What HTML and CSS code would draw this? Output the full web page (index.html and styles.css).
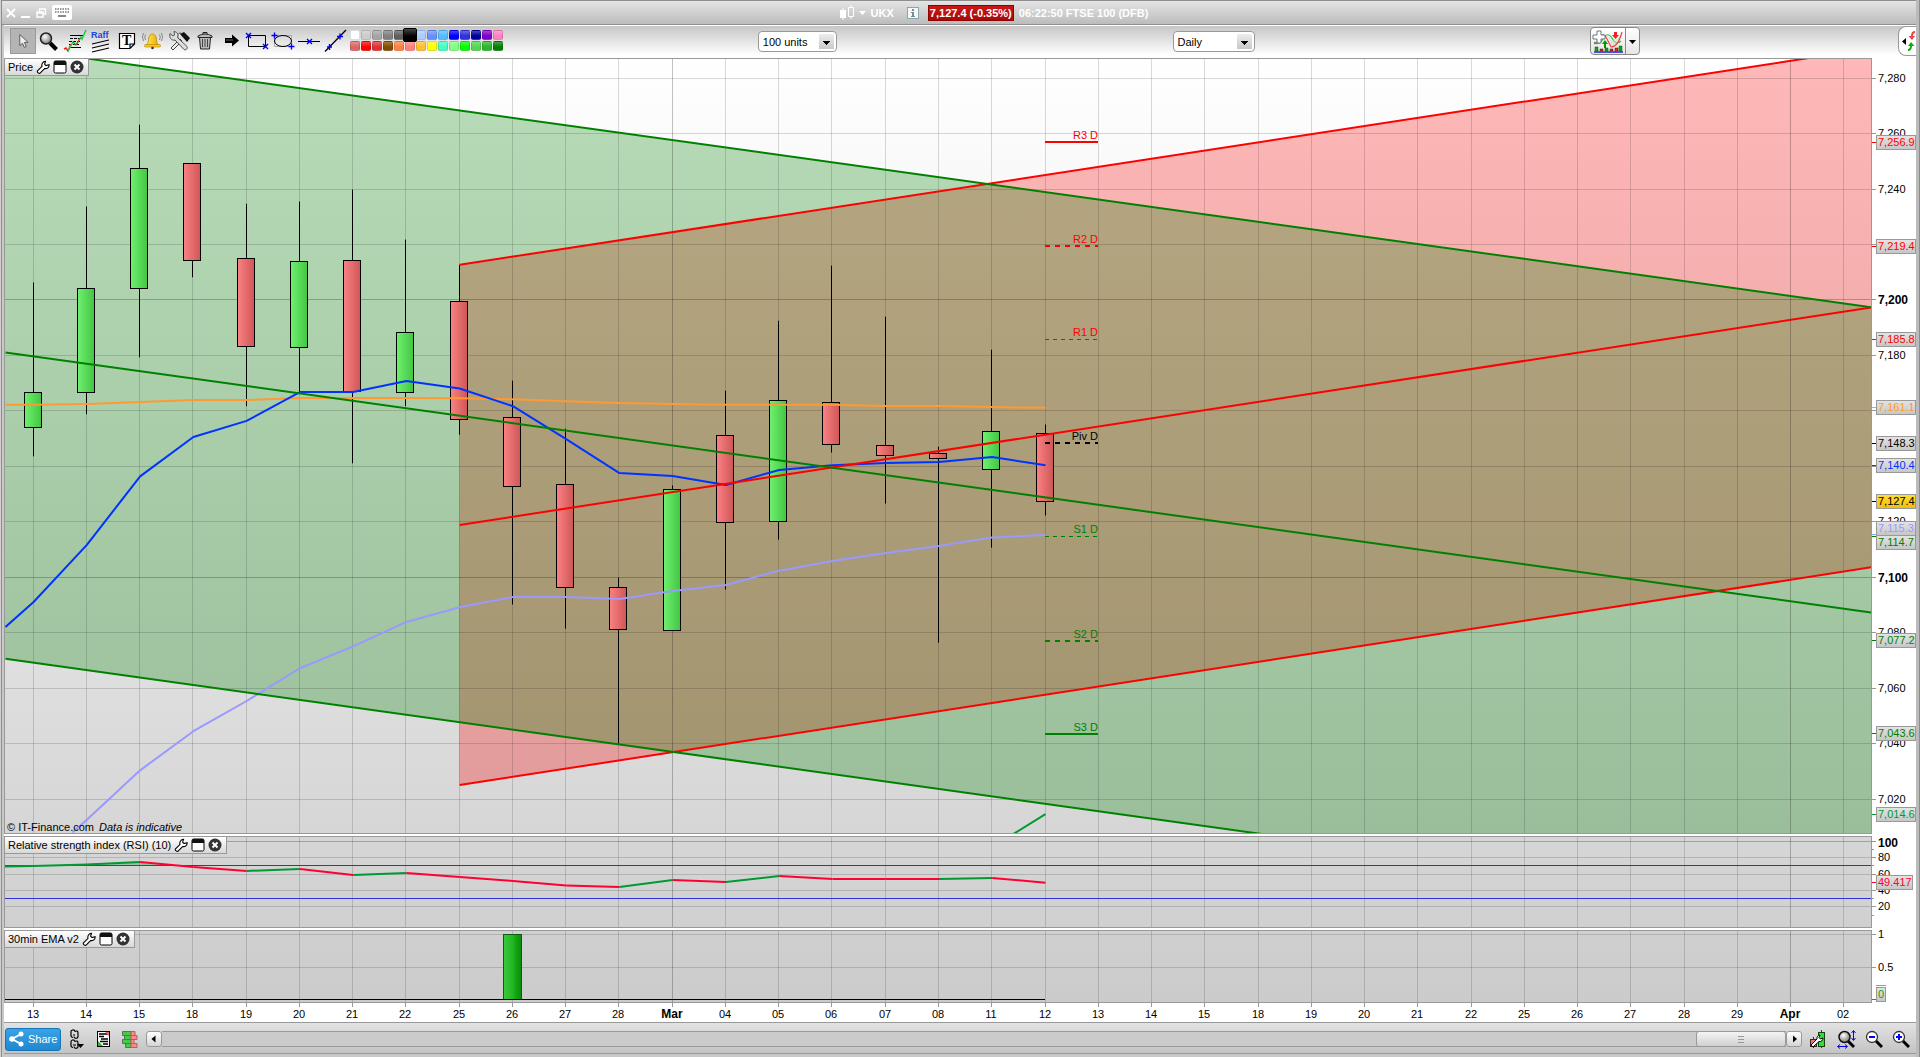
FILE: index.html
```html
<!DOCTYPE html>
<html lang="en">
<head>
<meta charset="utf-8">
<title>UKX - FTSE 100 (DFB)</title>
<link rel="stylesheet" href="styles.css">
</head>
<body>
<svg class="defs" aria-hidden="true">
  <defs>
    <linearGradient id="up"><stop offset="0" stop-color="#70f070"/><stop offset="1" stop-color="#42c642"/></linearGradient>
    <linearGradient id="down"><stop offset="0" stop-color="#fa8282"/><stop offset="1" stop-color="#cf5656"/></linearGradient>
    <linearGradient id="histo"><stop offset="0" stop-color="#3cc83c"/><stop offset=".5" stop-color="#22b822"/><stop offset=".7" stop-color="#10a510"/><stop offset="1" stop-color="#0c8a0c"/></linearGradient>
    <linearGradient id="tag" x2="0" y2="1"><stop offset="0" stop-color="#e4e4e4"/><stop offset="1" stop-color="#c6c6c6"/></linearGradient>
    <linearGradient id="tagLast" x2="0" y2="1"><stop offset="0" stop-color="#ffe030"/><stop offset="1" stop-color="#efbc10"/></linearGradient>
    <radialGradient id="lens" cx=".4" cy=".35"><stop offset="0" stop-color="#fff"/><stop offset="1" stop-color="#999"/></radialGradient>
    <linearGradient id="gold"><stop offset="0" stop-color="#ffe95a"/><stop offset="1" stop-color="#eba800"/></linearGradient>
    <symbol id="wrench" viewBox="0 0 14 14"><path d="M1.5 10.8 6 6.4C5.300 4 6.800 1.500 9.500 1.300L8.600 4.200l1.400 1.400 3.100-.8c.2 2.600-2 4.200-4.500 3.700l-4.500 4.600c-1 .8-3.400-.8-2.600-2.300z" fill="#fff" stroke="#000" stroke-width="1.100"/></symbol>
    <symbol id="window" viewBox="0 0 14 14"><rect x="1" y="1" width="12" height="12" rx="1.500" fill="#fff" stroke="#000"/><path d="M1 5V2.500Q1 1 2.500 1h9Q13 1 13 2.500V5z" fill="#111"/></symbol>
    <symbol id="close" viewBox="0 0 14 14"><circle cx="7" cy="7" r="6.500" fill="#333"/><path d="m4.500 4.500 5 5m0-5-5 5" stroke="#fff" stroke-width="2"/></symbol>
  </defs>
</svg>

<div class="app">
  <header class="titlebar">
    <div class="window-buttons">
      <button class="plain" aria-label="Close window"><svg width="10" height="14" viewBox="0 0 10 14"><path d="m1 3 8 8m0-8-8 8" stroke="#fff" stroke-width="1.800"/></svg></button>
      <button class="plain" aria-label="Minimise"><svg width="10" height="14" viewBox="0 0 10 14"><path d="M0 11h9" stroke="#fff" stroke-width="2"/></svg></button>
      <button class="plain" aria-label="Restore"><svg width="11" height="14" viewBox="0 0 11 14"><path d="M3.500 5V3h6v5h-2M3 3h7M1 6h6v5H1zM1 7h6" fill="none" stroke="#fff" stroke-width="1.400"/></svg></button>
      <button class="plain" aria-label="Keyboard"><svg width="20" height="15" viewBox="0 0 20 15"><rect width="20" height="15" rx="2" fill="#fff"/><path d="M3 4h14M3 7h14" stroke="#999" stroke-width="2" stroke-dasharray="1.500 1"/><path d="M6 11h8" stroke="#888" stroke-width="2"/></svg></button>
    </div>
    <h1 class="instrument">
      <svg width="14" height="17" viewBox="0 0 14 17"><path d="M0 6h6v8H0zM2.500 4h1v12h-1z" fill="#fff"/><path d="M8.500 3.500h5v9h-5zM11 1v2.500M11 12.500V15" fill="none" stroke="#fff"/></svg>
      <svg class="caret" width="7" height="4" viewBox="0 0 7 4"><path d="M0 0h7L3.500 4z" fill="#fff"/></svg>
      <span class="symbol">UKX</span>
      <svg width="12" height="12" viewBox="0 0 12 12"><rect x=".5" y=".5" width="11" height="11" fill="#f4f8f8" stroke="#86a8ae"/><path d="M5 2h2v2H5zM4 5h3v4h1v1H4V9h1V6H4z" fill="#7b8d90"/></svg>
      <span class="quote">7,127.4 (-0.35%)</span>
      <span>06:22:50 FTSE 100 (DFB)</span>
    </h1>
  </header>

  <div class="toolbar">
    <div class="tools">
      <button class="tool active" aria-label="Pointer"><svg viewBox="0 0 26 26"><path d="M9.500 6v12l3-2.500 2 4.500 2-1-2-4.500h4z" fill="#eee" stroke="#555"/></svg></button>
      <button class="tool" aria-label="Zoom"><svg viewBox="0 0 26 26"><path d="m14 15 6.500 6.500" stroke="#000" stroke-width="4"/><circle cx="10" cy="10.500" r="5.500" fill="url(#lens)" stroke="#222" stroke-width="1.500"/></svg></button>
      <button class="tool" aria-label="Trading from chart"><svg viewBox="0 0 26 26"><path d="M8 7.500h13M7 19.500h12" stroke="#000"/><path d="M8 10.500h12M7 13.500h12M7 16.500h10" stroke="#000" stroke-dasharray="3 1"/><path d="m2 21 2-1 2 3 3-7" fill="none" stroke="#e22" stroke-width="1.500"/><path d="m6 23 5-9 3 3 5-8 1 2 4-9" fill="none" stroke="#2c4" stroke-width="1.500"/><path d="m11 14 3 3 4-7" fill="none" stroke="#e22"/></svg></button>
      <button class="tool" aria-label="Raff regression"><svg viewBox="0 0 26 26"><text x="3" y="10" class="raff">Raff</text><path d="m4 16 17-4M4 20l17-4M4 24l17-4" stroke="#000" stroke-width="1.200"/></svg></button>
      <button class="tool" aria-label="Text"><svg viewBox="0 0 26 26"><path d="M5.500 5.500h15V16L16 20.500H5.500zM20.500 16H16v4.500" fill="#fff" stroke="#000" stroke-width="1.200"/><text x="8" y="17" class="tee">T</text></svg></button>
      <button class="tool" aria-label="Alerts"><svg viewBox="0 0 26 26"><path d="M6 17c3-2 2-5 3-8 .6-2 2-3 3.500-3S15.400 7 16 9c1 3 0 6 3 8z" fill="url(#gold)" stroke="#b98600" stroke-width=".8"/><rect x="4.500" y="16.500" width="16" height="2.500" rx="1" fill="#f8c820" stroke="#b98600" stroke-width=".6"/><circle cx="12.500" cy="20" r="1.300" fill="#333"/><path d="M5.500 6.500Q4 9 5.500 12M3.500 5Q1.500 9 3.500 13M19.500 6.500Q21 9 19.500 12M21.500 5Q23.500 9 21.500 13" fill="none" stroke="#888"/></svg></button>
      <button class="tool" aria-label="Settings"><svg viewBox="0 0 26 26"><path d="m5 20 9-9 2 2-9 9zM15 5c-4 0-4 4-2 6" fill="#eee" stroke="#444"/><path d="m14 6 4-2 6 6-3 4z" fill="#111"/><path d="M4 5.500 7 8l1.500-1L8 3.500C12 4 12.500 7 11.500 9.500l9.500 9c1 2-1 4-3 3L9 12C5 13 3 9 4 5.500z" fill="#ddd" stroke="#444" stroke-width=".9"/></svg></button>
      <button class="tool" aria-label="Delete"><svg viewBox="0 0 26 26"><path d="M7.500 9.500h11l-1 11.500h-9z" fill="#bbb" stroke="#222"/><path d="M10.500 11v8M13 11v8M15.500 11v8" stroke="#444"/><path d="M6 8q7-4 14 0v1.500H6zM11 6V4.500h4V6" fill="#bbb" stroke="#222"/></svg></button>
      <button class="tool" aria-label="Arrow"><svg viewBox="0 0 26 26"><path d="M7 10h7V6.500l7 6-7 6V15H7z" fill="#000"/><path d="M8 12h7" stroke="#666"/></svg></button>
      <button class="tool" aria-label="Rectangle"><svg viewBox="0 0 26 26"><path d="M4.500 7.500h17v11h-17z" fill="none" stroke="#000"/><path d="m2 5 5 5m0-5-5 5M19 16l5 5m0-5-5 5" stroke="#00f" stroke-width="1.400"/></svg></button>
      <button class="tool" aria-label="Ellipse"><svg viewBox="0 0 26 26"><path d="M4.500 7.500h17v11h-17z" fill="none" stroke="#aaa"/><ellipse cx="13" cy="13" rx="8.500" ry="5.500" fill="none" stroke="#000"/><path d="M4.500 4.500v6m-3-3h6M21.500 15.500v6m-3-3h6" stroke="#00f" stroke-width="1.400"/></svg></button>
      <button class="tool" aria-label="Horizontal line"><svg viewBox="0 0 26 26"><path d="M2 13.500h22" stroke="#000"/><path d="m11 11 5 5m0-5-5 5" stroke="#00f" stroke-width="1.400"/></svg></button>
      <button class="tool" aria-label="Trend line"><svg viewBox="0 0 26 26"><path d="M3 23.500 24 2" stroke="#000" stroke-width="1.300"/><path d="m5 19 5 0m-2.500-3v6M15 8.500h6m-3-3v6" stroke="#00f" stroke-width="1.400"/></svg></button>
      <div class="palette" id="palette" role="group" aria-label="Colours"></div>
    </div>
    <select class="select units" aria-label="Units"><option>100 units</option></select>
    <select class="select period" aria-label="Timeframe"><option>Daily</option></select>
    <div class="indicators">
      <button aria-label="Add indicator"><svg width="34" height="26" viewBox="0 0 34 26"><path d="M3 14q5 5 10-5 4-5 8 1 4 8 9 3" fill="none" stroke="#3b3" stroke-width="1.200"/><path d="M14 6q5 4 6 13 6 0 11-15-4 8-10 8-3-4-7-6z" fill="#cdc8"/><path d="M3 16q3-1 6-7 4-5 7 2l4 8q7 0 11-15" fill="none" stroke="#e44" stroke-width="1.200"/><path d="M6 3h4v4h4v4h-4v4H6v-4H2V7h4z" fill="#fff" stroke="#678"/><path d="m14 12-3 4h2v4h2v-4h2z" fill="#090"/><path d="M23 4h3v3h2l-3.500 4L21 7h2z" fill="#e22"/><path d="M4 19h3v4H4zM14 20h3v3h-3zM28 18h3v5h-3z" fill="#1a1" stroke="#050" stroke-width=".5"/><path d="M9 21h3v2H9zM19 21h3v2h-3zM24 20h3v3h-3z" fill="#d33" stroke="#500" stroke-width=".5"/><path d="M3 24h29" stroke="#22c" stroke-width="1.500"/></svg></button>
      <button aria-label="Indicator list"><svg width="13" height="26" viewBox="0 0 13 26"><path d="M3 12h7l-3.500 4z"/></svg></button>
    </div>
    <button class="drawer" aria-label="Open side panel"><svg width="17" height="28" viewBox="0 0 17 28"><path d="M7 11v7l-4-3.500z"/><path d="M16 4q-4 0-4 5H9.500l3.500 4 3-4h-2q0-3 2-3z" fill="#e44"/><path d="M9 24q4 0 4-5h2.500L12 15l-3 4h2q0 3-2 3z" fill="#1a1"/></svg></button>
  </div>

  <main class="charts">
    <section class="panel price">
      <div class="plot">
        <svg class="canvas" id="pricePlot"></svg>
        <div class="panel-head"><h2>Price</h2>
          <button class="plain" aria-label="Configure"><svg width="14" height="14"><use href="#wrench"/></svg></button><button class="plain" aria-label="Detach"><svg width="14" height="14"><use href="#window"/></svg></button><button class="plain" aria-label="Close"><svg width="14" height="14"><use href="#close"/></svg></button>
        </div>
        <p class="credit">© IT-Finance.com <em>Data is indicative</em></p>
      </div>
      <div class="axis"><svg class="canvas" id="priceAxis"></svg></div>
    </section>
    <section class="panel rsi">
      <div class="plot">
        <svg class="canvas" id="rsiPlot"></svg>
        <div class="panel-head"><h2>Relative strength index (RSI) (10)</h2>
          <button class="plain" aria-label="Configure"><svg width="14" height="14"><use href="#wrench"/></svg></button><button class="plain" aria-label="Detach"><svg width="14" height="14"><use href="#window"/></svg></button><button class="plain" aria-label="Close"><svg width="14" height="14"><use href="#close"/></svg></button>
        </div>
      </div>
      <div class="axis"><svg class="canvas" id="rsiAxis"></svg></div>
    </section>
    <section class="panel ema">
      <div class="plot">
        <svg class="canvas" id="emaPlot"></svg>
        <div class="panel-head"><h2>30min EMA v2</h2>
          <button class="plain" aria-label="Configure"><svg width="14" height="14"><use href="#wrench"/></svg></button><button class="plain" aria-label="Detach"><svg width="14" height="14"><use href="#window"/></svg></button><button class="plain" aria-label="Close"><svg width="14" height="14"><use href="#close"/></svg></button>
        </div>
      </div>
      <div class="axis"><svg class="canvas" id="emaAxis"></svg></div>
    </section>
    <div class="dates"><svg class="canvas" id="dateAxis"></svg></div>
  </main>

  <footer class="bottombar">
    <button class="share"><svg width="15" height="16" viewBox="0 0 15 16"><path d="M12 3 3 8l9 5" fill="none" stroke="#fff" stroke-width="1.800"/><circle cx="12" cy="3" r="2.500" fill="#fff"/><circle cx="3" cy="8" r="2.800" fill="#fff"/><circle cx="12" cy="13" r="2.500" fill="#fff"/></svg>Share</button>
    <div class="bottom-tools">
      <button class="plain" aria-label="Link windows"><svg width="16" height="20" viewBox="0 0 16 20"><path d="M4 8.500a2 2 0 0 1-2-2v-3a2 2 0 0 1 4-1M6 2.500q3-1.500 3 1.500v3a2 2 0 0 1-4 .5M4 18.500a2 2 0 0 1-2-2v-3a2 2 0 0 1 4-1M6 12.500q3-1.500 3 1.500v3a2 2 0 0 1-4 .5M4 6h2M4 16h3" fill="none" stroke="#000" stroke-width="1.200"/><path d="M8 15h7l-3.500 4z"/></svg></button>
      <button class="plain" aria-label="Orders"><svg width="13" height="16" viewBox="0 0 13 16"><rect x=".5" y=".5" width="12" height="15" fill="#fff" stroke="#000"/><path d="M2 3h9M2 5.500h5M4 8h7M3 10.500h8M6 13h5" stroke="#000" stroke-width="1.600"/><path d="M8 1h4v4z" fill="#e66"/><path d="M1 15v-5l5 5z" fill="#2b2"/></svg></button>
      <button class="plain" aria-label="Market depth"><svg width="16" height="17" viewBox="0 0 16 17"><path d="M.5.5H9v4H.5zM2.500 4.500H9v4H2.500zM.5 8.500H9v4H.5zM3.500 12.500H9v4H3.500z" fill="#4c4" stroke="#575"/><path d="M9 .5h4v4H9zM9 4.500h6v4H9zM9 8.500h3v4H9zM9 12.500h6v4H9z" fill="#f88" stroke="#a66"/></svg></button>
    </div>
    <div class="scroller" role="group" aria-label="Scroll through history">
      <button class="step" aria-label="Back"><svg width="14" height="14" viewBox="0 0 14 14"><path d="M8.500 3.500v7l-4-3.500z"/></svg></button>
      <div class="track"><div class="thumb"><svg width="6" height="7" viewBox="0 0 6 7"><path d="M0 .5h6M0 3.500h6M0 6.500h6" stroke="#999"/></svg></div></div>
      <button class="step" aria-label="Forward"><svg width="14" height="14" viewBox="0 0 14 14"><path d="M6 3.500v7l4-3.500z"/></svg></button>
    </div>
    <div class="view-tools">
      <button class="plain" aria-label="Candle settings"><svg width="18" height="20" viewBox="0 0 18 20"><path d="M4.500 8v11M12.500 1v18" stroke="#333"/><rect x="1.500" y="10.500" width="6" height="7" fill="#e77" stroke="#422"/><rect x="9.500" y="3.500" width="6" height="14" fill="#3d3" stroke="#141"/><path d="M2 16l6-6c-.5-2 1-4 3-4L10 8.500l1.500 1.500L14 9c0 2.500-2 4-4 3.500L4 18z" fill="#fff" stroke="#000"/></svg></button>
      <button class="plain" aria-label="Fit"><svg width="20" height="20" viewBox="0 0 20 20"><path d="m12 12 6 6" stroke="#000" stroke-width="3"/><circle cx="8.500" cy="8" r="5.500" fill="url(#lens)" stroke="#111" stroke-width="1.500"/><path d="M17.500 2v9M15.500 4l2-2.500 2 2.500M15.500 9l2 2.500 2-2.500M2 17.500h9M4 15.500l-2.500 2L4 19.500M9 15.500l2.500 2-2.500 2" fill="none" stroke="#00f"/></svg></button>
      <button class="plain" aria-label="Zoom out"><svg width="18" height="18" viewBox="0 0 18 18"><path d="m10 10 7 7" stroke="#000" stroke-width="3"/><circle cx="7" cy="7" r="5.500" fill="#fff" stroke="#333" stroke-width="1.300"/><path d="M4 7h6" stroke="#00f" stroke-width="2"/></svg></button>
      <button class="plain" aria-label="Zoom in"><svg width="18" height="18" viewBox="0 0 18 18"><path d="m10 10 7 7" stroke="#000" stroke-width="3"/><circle cx="7" cy="7" r="5.500" fill="#fff" stroke="#333" stroke-width="1.300"/><path d="M4 7h6M7 4v6" stroke="#00f" stroke-width="2"/></svg></button>
    </div>
  </footer>
</div>
<script src="chart.js"></script>
</body>
</html>
```
FILE: styles.css
```css
* { box-sizing: border-box; }
body {
  margin: 0;
  font: 11px/14px "Liberation Sans", Arial, sans-serif;
  color: #000;
  background: #bdbdbd;
}
h1, h2, p { margin: 0; font-size: inherit; font-weight: normal; }
button { padding: 0; border: 0; font: inherit; color: inherit; }
svg { display: block; }
.defs { position: absolute; width: 0; height: 0; }
.plain { background: none; }

.app {
  display: grid;
  grid-template-rows: 25px 33px 1fr 32px;
  min-height: 100vh;
  padding: 0 4px 3px;
  background: linear-gradient(90deg, #d0d0d0 1px, #8e8e8e 1px 2px, #c8c8c8 2px calc(100% - 4px), #bbb calc(100% - 4px) calc(100% - 1px), #8e8e8e calc(100% - 1px));
}

.titlebar {
  display: flex;
  align-items: center;
  margin: 0 0 0 -2px;
  padding: 0 0 0 4px;
  border-top: 1px solid #8e8e8e;
  border-bottom: 1px solid #8e8e8e;
  background: linear-gradient(#e4e4e4, #bcbcbc);
  color: #fff;
}
.window-buttons { display: flex; align-items: center; gap: 5px; }
.instrument {
  flex: 1;
  display: flex;
  align-items: center;
  justify-content: center;
  gap: 5px;
  font-weight: bold;
}
.symbol { margin-right: 8px; }
.quote {
  margin-left: 4px;
  padding: 0 1px;
  border: 1px solid #8e0000;
  background: linear-gradient(#c81818, #a80808);
}

.toolbar {
  display: grid;
  grid-template-columns: auto 254fr 79px 336fr 82px 336fr 50px 258fr 18px;
  align-items: center;
  padding-bottom: 2px;
  border-top: 1px solid #fff;
  background: linear-gradient(#c6c6c6, #fff 90%);
}
.tools { display: flex; align-items: center; padding-left: 6px; }
.tool { width: 26px; height: 26px; background: none; }
.tool.active { border: 1px solid #999; background: #b4b4b4; }
.raff { font-size: 9px; font-weight: bold; fill: #2244dd; }
.tee { font: bold 14px "Liberation Serif", serif; }
.palette {
  display: grid;
  grid-template-columns: repeat(14, 11px);
  grid-auto-rows: 11px;
  margin-left: 2px;
}
.swatch {
  width: 10px;
  height: 10px;
  border-radius: 2px;
  border: 1px solid #0002;
  background-image: linear-gradient(#fff4, #fff0 60%);
}
.swatch.chosen { width: 14px; height: 14px; margin: -2px; z-index: 1; border-color: #000; }

.select {
  appearance: none;
  height: 21px;
  margin-top: 1px;
  padding: 0 18px 0 4px;
  border: 1px solid #999;
  border-radius: 4px;
  color: #000;
  font: inherit;
  background:
    linear-gradient(#000, #000) right 6px top 9px / 7px 1px no-repeat,
    linear-gradient(#000, #000) right 7px top 10px / 5px 1px no-repeat,
    linear-gradient(#000, #000) right 8px top 11px / 3px 1px no-repeat,
    linear-gradient(#000, #000) right 9px top 12px / 1px 1px no-repeat,
    linear-gradient(#eee, #c8c8c8) right 2px center / 15px 15px no-repeat,
    #fff;
}
.units { grid-column: 3; }
.period { grid-column: 5; }
.indicators {
  grid-column: 7;
  display: flex;
  height: 28px;
  border: 1px solid #888;
  border-radius: 4px;
  background: linear-gradient(#fff, #e6e6e6);
}
.indicators button { background: none; }
.indicators button + button { border-left: 1px solid #888; }
.drawer {
  grid-column: 9;
  border: 1px solid #999;
  border-right: 0;
  border-radius: 8px 0 0 8px;
  background: #fff;
}

.charts {
  display: grid;
  grid-template-rows: minmax(260px, 776fr) minmax(60px, 94fr) minmax(50px, 75fr) 19px;
  background: #fff;
}
.panel { display: grid; grid-template-columns: 1fr 44px; min-width: 0; }
.rsi, .ema { padding-top: 2px; }
.plot { position: relative; overflow: hidden; border: 1px solid #999; }
.axis, .dates { position: relative; }
.canvas { position: absolute; inset: 0; width: 100%; height: 100%; }
.price .plot { background: linear-gradient(#fff, #d6d6d6); }
.rsi .plot { background: linear-gradient(#d6d6d6, #d0d0d0); }
.ema .plot { background: linear-gradient(#d0d0d0, #cbcbcb); }

.panel-head {
  position: absolute;
  top: 0;
  left: 0;
  display: flex;
  align-items: center;
  gap: 3px;
  height: 17px;
  padding: 0 4px 1px 3px;
  border: solid #999;
  border-width: 0 1px 1px 0;
  background: linear-gradient(#fff, #d8d8d8);
}
.credit { position: absolute; left: 2px; bottom: -1px; }
.credit em { margin-left: 2px; }

.canvas text { font-size: 11px; }
.canvas .major { font-size: 12px; font-weight: bold; }
.grid { stroke: #000; stroke-opacity: .15; }
.grid-major { stroke: #000; stroke-opacity: .24; }
.tick { stroke: #999; }
.line { fill: none; stroke-width: 2; stroke-linejoin: round; }
.end { text-anchor: end; }
.mid { text-anchor: middle; }

.bottombar {
  display: flex;
  align-items: center;
  padding: 2px 6px 0 1px;
  border-top: 1px solid #999;
  border-bottom: 1px solid #999;
  background: linear-gradient(#e2e2e2, #c4c4c4);
}
.share {
  display: flex;
  align-items: center;
  gap: 4px;
  height: 23px;
  padding: 0 3px;
  border: 1px solid #1474b8;
  border-radius: 3px;
  color: #fff;
  background: linear-gradient(#3aa2e6, #1f88d0);
}
.bottom-tools { display: flex; align-items: center; gap: 12px; padding: 0 8px 0 8px; }
.scroller { flex: 1; display: flex; align-items: center; }
.step {
  height: 16px;
  border: 1px solid #999;
  border-radius: 3px;
  background: linear-gradient(#fff, #d4d4d4);
}
.track {
  flex: 1;
  display: flex;
  justify-content: flex-end;
  height: 16px;
  border: solid #999;
  border-width: 1px 0;
  background: #cbcbcb;
}
.thumb {
  width: 90px;
  display: grid;
  place-items: center;
  margin: -1px 0;
  border: 1px solid #999;
  border-radius: 3px;
  background: linear-gradient(#f4f4f4, #d0d0d0);
}
.view-tools { display: flex; align-items: center; gap: 9px; padding-left: 7px; }
```
FILE: chart.js
```js
const SESSIONS = ['13', '14', '15', '18', '19', '20', '21', '22', '25', '26', '27', '28', 'Mar', '04', '05', '06', '07', '08',
  '11', '12', '13', '14', '15', '18', '19', '20', '21', '22', '25', '26', '27', '28', '29', 'Apr', '02'];
const LEFT = -0.5276;
const SPAN = 35.037;

// open, high, low, close
const CANDLES = [
  [7153.9, 7206.3, 7143.6, 7166.8], [7166.8, 7233.7, 7158.8, 7204.3], [7204.3, 7263.2, 7179.3, 7247.3],
  [7249.1, 7249.1, 7208.2, 7214.4], [7214.8, 7234.7, 7161.7, 7183.4], [7182.7, 7235.5, 7167, 7213.7],
  [7214.4, 7239.8, 7141.1, 7167.1], [7166.5, 7221.8, 7161.7, 7188.1], [7199.3, 7212.7, 7151.4, 7157],
  [7157.5, 7170.9, 7090.2, 7132.6], [7133.3, 7153.6, 7081.5, 7096.4], [7096.2, 7099.9, 7040, 7081.2],
  [7081, 7133.1, 7081, 7131.5], [7151.3, 7167.3, 7095.6, 7119.6], [7120.2, 7192.5, 7113.6, 7163.6],
  [7163.2, 7212.4, 7145, 7148], [7147.7, 7194, 7126.6, 7144], [7144.5, 7147.1, 7076.4, 7142.7],
  [7138.7, 7182.1, 7110.7, 7152.4], [7151.7, 7155.1, 7122.3, 7127.4]];

const AVERAGES = [
  { color: '#ff9933', from: 0, lead: [LEFT, 7162.2], v: [7162.2, 7162.5, 7163.2, 7163.9, 7163.9, 7164.7, 7164.7, 7164.7, 7164.6, 7164.2, 7163.5, 7162.9, 7162.5, 7162.2, 7162.2, 7162.2, 7161.8, 7161.8, 7161.4, 7161.1] },
  { color: '#9999ff', from: 1, lead: [0.73, 7008], v: [7012.6, 7030.4, 7044.5, 7055.4, 7067.2, 7075.1, 7083.9, 7089.2, 7092.9, 7092.9, 7092.2, 7095.1, 7097.2, 7102.4, 7105.9, 7108.8, 7111.3, 7114.4, 7115.3] },
  { color: '#0033ff', from: 0, lead: [LEFT, 7082.1], v: [7091.1, 7111.7, 7136.4, 7150.6, 7156.4, 7166.8, 7166.8, 7170.8, 7168.1, 7161.7, 7149.8, 7137.6, 7136.5, 7133.3, 7138.7, 7140.4, 7141.2, 7141.6, 7143.4, 7140.4] },
  { color: '#009933', from: 19, lead: [18.4, 7007.5], v: [7014.6] }];

const CHANNELS = [
  { color: '#ff0000', from: 8, lines: [[7212.7, 7290.7], [7118.9, 7197.3], [7025.1, 7103.6]] },
  { color: '#008000', from: LEFT, lines: [[7291.2, 7197.4], [7181.1, 7087.3], [7070.6, 6976.8]] }];

const PIVOTS = [
  ['R3 D', 7256.9, '#ff0000', 2, ''], ['R2 D', 7219.4, '#ff0000', 2, '5 5'], ['R1 D', 7185.8, '#ff0000', 1, '4 4'],
  ['Piv D', 7148.3, '#000000', 2, '5 5'], ['S1 D', 7114.7, '#008000', 1, '4 4'], ['S2 D', 7077.2, '#008000', 2, '5 5'],
  ['S3 D', 7043.6, '#008000', 2, '']];

// text, level, colour, shift of the tag away from its tick
const TAGS = [
  ['7,256.9', 7256.9, '#ff0000', 0], ['7,219.4', 7219.4, '#ff0000', 0], ['7,185.8', 7185.8, '#ff0000', 0],
  ['7,161.1', 7161.1, '#ff9933', 0], ['7,148.3', 7148.3, '#000000', 0], ['7,140.4', 7140.4, '#0033ff', 0],
  ['7,127.4', 7127.4, '#000000', 0], ['7,114.7', 7114.7, '#008000', 6], ['7,115.3', 7115.3, '#9999ff', -6],
  ['7,077.2', 7077.2, '#008000', 0], ['7,043.6', 7043.6, '#008000', 0], ['7,014.6', 7014.6, '#009933', 0]];

const RSI = [69.8, 71.7, 74.6, 68.5, 63.7, 66.1, 58.8, 61.2, 56.3, 51.5, 46.1, 44.1, 52.7, 50.2, 57.6, 53.9, 53.9, 53.9, 55.1, 49.4];

const el = id => document.getElementById(id);
const snap = v => Math.floor(v) + 0.5;
const line = (x1, y1, x2, y2, attrs) => `<line x1="${x1}" y1="${y1}" x2="${x2}" y2="${y2}" ${attrs}/>`;
const text = (x, y, s, attrs = '') => `<text x="${x}" y="${y}" ${attrs}>${s}</text>`;
const scale = (node, top, bottom) => v => (top - v) / (top - bottom) * node.clientHeight;

function grid(node, x, y, levels, majors) {
  const w = node.clientWidth, h = node.clientHeight;
  let out = '';
  SESSIONS.forEach((d, i) => {
    out += line(snap(x(i)), 0, snap(x(i)), h, `class="${isNaN(d) ? 'grid-major' : 'grid'}"`);
  });
  levels.forEach(v => {
    out += line(0, snap(y(v)), w, snap(y(v)), `class="${majors.includes(v) ? 'grid-major' : 'grid'}"`);
  });
  return out;
}

function tag(y, s, color, shift = 0, fill = 'tag', width = 39) {
  const ty = snap(y);
  return line(0, ty, 4, ty, `stroke="${color}"`) +
    `<rect x="4.5" y="${ty + shift - 7}" width="${width}" height="14" fill="url(#${fill})" stroke="#999"/>` +
    text(6, ty + shift + 3.5, s, `fill="${color}"`);
}

function drawPrice(x) {
  const plot = el('pricePlot'), y = scale(plot, 7286.9, 7007.8), w = plot.clientWidth;
  const levels = [];
  for (let v = 7280; v >= 7020; v -= 20) levels.push(v);
  let out = '';
  CHANNELS.forEach(c => {
    const [top, , low] = c.lines, x0 = x(c.from);
    out += `<polygon points="${x0},${y(top[0])} ${w},${y(top[1])} ${w},${y(low[1])} ${x0},${y(low[0])}" fill="${c.color}" fill-opacity=".28"/>`;
  });
  out += grid(plot, x, y, levels, [7200, 7100]);
  CANDLES.forEach(([o, h, l, c], i) => {
    const cx = snap(x(i)), top = snap(y(Math.max(o, c))), bottom = snap(y(Math.min(o, c)));
    out += line(cx, y(h), cx, y(l), 'stroke="#000"');
    out += `<rect x="${cx - 9}" y="${top}" width="17" height="${bottom - top}" fill="url(#${c > o ? 'up' : 'down'})" stroke="#000"/>`;
  });
  AVERAGES.forEach(a => {
    const pts = [a.lead, ...a.v.map((v, k) => [a.from + k, v])].map(([i, v]) => `${x(i) + 0.5},${y(v)}`);
    out += `<polyline class="line" points="${pts.join(' ')}" stroke="${a.color}"/>`;
  });
  CHANNELS.forEach(c => c.lines.forEach(([a, b]) => {
    out += line(x(c.from) + 0.5, y(a), w, y(b), `stroke="${c.color}" stroke-width="2"`);
  }));
  PIVOTS.forEach(([name, v, color, width, dash]) => {
    const py = width === 2 ? Math.round(y(v)) : snap(y(v));
    out += line(Math.round(x(19)), py, Math.round(x(20)), py, `stroke="${color}" stroke-width="${width}" stroke-dasharray="${dash}"`);
    out += text(Math.round(x(20)), Math.floor(py) - 3, name, `class="end" fill="${color}"`);
  });
  plot.innerHTML = out;

  out = '';
  levels.forEach(v => {
    const ty = snap(y(v) + 1), major = v % 100 === 0;
    out += line(0, ty, 4, ty, 'class="tick"');
    if (TAGS.some(t => Math.abs(t[1] - v) < 2)) return;
    out += text(6, ty + (major ? 4 : 3), v.toLocaleString('en-US'), major ? 'class="major"' : '');
  });
  TAGS.forEach(([s, v, color, shift]) => {
    out += tag(y(v) + 1, s, color, shift, s === '7,127.4' ? 'tagLast' : 'tag');
  });
  el('priceAxis').innerHTML = out;
}

function drawRsi(x) {
  const plot = el('rsiPlot'), y = scale(plot, 105.1, -4.6), w = plot.clientWidth;
  let out = grid(plot, x, y, [100, 80, 60, 40, 20], [100]);
  [70, 30].forEach(v => { out += line(0, snap(y(v)), w, snap(y(v)), 'stroke="#3030dc"'); });
  out += `<polygon points="${x(0.1)},${y(70)} ${x(2)},${y(74.6)} ${x(2.75)},${y(70)}" fill="#009933" fill-opacity=".3"/>`;
  [69, ...RSI].forEach((v, k, all) => {
    if (!k) return;
    const x0 = k === 1 ? 0 : x(k - 2) + 0.5;
    out += line(x0, y(all[k - 1]), x(k - 1) + 0.5, y(v), `stroke="${v > all[k - 1] ? '#009933' : '#ff0033'}" stroke-width="2"`);
  });
  plot.innerHTML = out;

  out = '';
  for (let v = 100; v >= 10; v -= 10) {
    const ty = snap(y(v) + 1);
    out += line(0, ty, v % 20 ? 2 : 4, ty, 'class="tick"');
    if (v % 20 === 0) out += text(6, ty + (v === 100 ? 5 : 3), v, v === 100 ? 'class="major"' : '');
  }
  out += tag(y(49.417) + 1, '49.417', '#ff0033', 0, 'tag', 36);
  el('rsiAxis').innerHTML = out;
}

function drawEma(x) {
  const plot = el('emaPlot'), y = scale(plot, 1.06, -0.04);
  const base = snap(y(0)), top = snap(y(1)), cx = snap(x(9));
  let out = grid(plot, x, y, [1, 0.5], []);
  out += `<rect x="${cx - 9}" y="${top}" width="18" height="${base - top}" fill="url(#histo)" stroke="#0a600a"/>`;
  out += line(0, base, Math.round(x(19)), base, 'stroke="#000"');
  plot.innerHTML = out;

  out = '';
  [1, 0.5].forEach(v => {
    const ty = snap(y(v) + 1);
    out += line(0, ty, 4, ty, 'class="tick"') + text(6, ty + 3, v);
  });
  out += tag(y(0) + 1, '0', '#10a010', -5, 'tag', 9);
  out += line(4, base - 13, 14, base - 13, 'class="tick"');
  el('emaAxis').innerHTML = out;
}

function drawDates(x) {
  el('dateAxis').innerHTML = SESSIONS.map((d, i) => {
    const cx = snap(x(i) + 1);
    return line(cx, 0, cx, 4, 'class="tick"') + text(Math.floor(cx), 15, d, `class="mid${isNaN(d) ? ' major' : ''}"`);
  }).join('');
}

function draw() {
  const w = el('pricePlot').clientWidth;
  const x = i => (i - LEFT) / SPAN * w;
  drawPrice(x);
  drawRsi(x);
  drawEma(x);
  drawDates(x);
}

const COLOURS = ['white', '#cccccc', '#a4a4a4', '#808080', '#606060', '#000000', '#aaccff', '#6690ff', '#55bbff', '#0000ff', '#3030dd', '#0000a0', '#8000c8', '#ff80c0',
  '#dd6666', '#ff0000', '#e23030', '#804c00', '#ff8040', '#ff8080', '#ffc030', '#ffff00', '#40ffc0', '#80ff80', '#00ff00', '#50d850', '#28b828', '#008000'];
el('palette').innerHTML = COLOURS.map(c =>
  `<button class="swatch${c === '#000000' ? ' chosen' : ''}" style="background-color:${c}" aria-label="${c}"></button>`).join('');

draw();
window.addEventListener('resize', draw);
```
